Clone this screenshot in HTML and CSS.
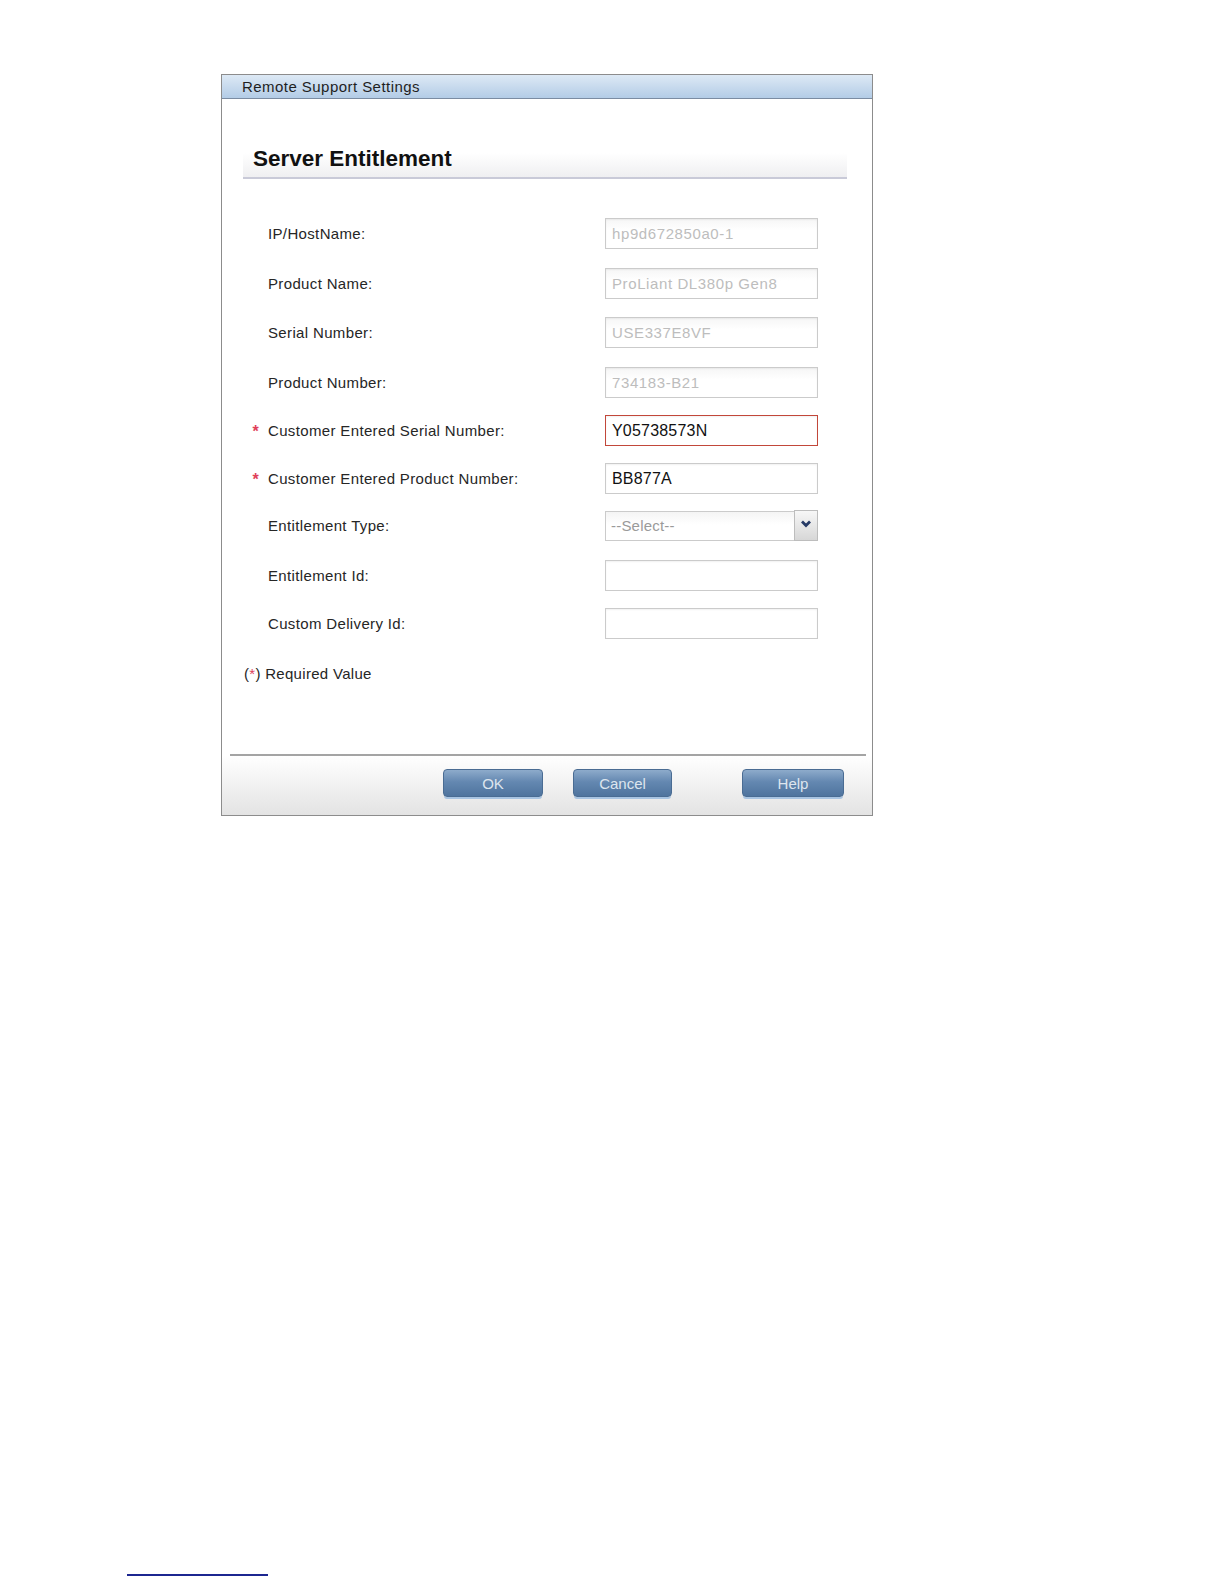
FILE: index.html
```html
<!DOCTYPE html>
<html lang="en">
<head>
<meta charset="utf-8">
<title>Remote Support Settings</title>
<link rel="stylesheet" href="styles.css">
</head>
<body>
<div class="dialog">
  <div class="titlebar">Remote Support Settings</div>
  <div class="main">
    <div class="heading">Server Entitlement</div>
    <div class="form">
      <div class="row"><span class="req"></span><span class="label">IP/HostName:</span><div class="field disabled">hp9d672850a0-1</div></div>
      <div class="row gap19"><span class="req"></span><span class="label">Product Name:</span><div class="field disabled">ProLiant DL380p Gen8</div></div>
      <div class="row gap18"><span class="req"></span><span class="label">Serial Number:</span><div class="field disabled">USE337E8VF</div></div>
      <div class="row gap19"><span class="req"></span><span class="label">Product Number:</span><div class="field disabled">734183-B21</div></div>
      <div class="row gap17"><span class="req">*</span><span class="label">Customer Entered Serial Number:</span><div class="field error">Y05738573N</div></div>
      <div class="row gap17"><span class="req">*</span><span class="label">Customer Entered Product Number:</span><div class="field">BB877A</div></div>
      <div class="row gap16"><span class="req"></span><span class="label">Entitlement Type:</span>
        <div class="select">
          <div class="select-value">--Select--</div>
          <div class="select-btn">
            <svg width="14" height="12" viewBox="0 0 14 12"><path d="M3 3.5 L7 7.5 L11 3.5" fill="none" stroke="#263a66" stroke-width="2.8"/></svg>
          </div>
        </div>
      </div>
      <div class="row gap19"><span class="req"></span><span class="label">Entitlement Id:</span><div class="field"></div></div>
      <div class="row gap17"><span class="req"></span><span class="label">Custom Delivery Id:</span><div class="field"></div></div>
    </div>
    <div class="note">(<span class="star">*</span>) Required Value</div>
  </div>
  <div class="footer">
    <div class="sep"></div>
    <div class="buttons">
      <div class="btn btn-ok">OK</div>
      <div class="btn btn-cancel">Cancel</div>
      <div class="btn btn-help">Help</div>
    </div>
  </div>
</div>
<div class="footnote-rule"></div>
</body>
</html>
```
FILE: styles.css
```css
html, body {
  margin: 0;
  padding: 0;
  background: #ffffff;
}
body {
  font-family: "Liberation Sans", Arial, sans-serif;
  color: #222;
}
.dialog {
  box-sizing: border-box;
  margin: 74px 0 0 221px;
  width: 652px;
  height: 742px;
  border: 1px solid #8c8c8c;
  display: flex;
  flex-direction: column;
  background: #fff;
}
.titlebar {
  height: 23px;
  line-height: 24px;
  border-bottom: 1px solid #7b8ca2;
  background: linear-gradient(to bottom, #dde9f5, #b3cce6);
  padding-left: 20px;
  font-size: 15px;
  letter-spacing: 0.45px;
  color: #1f1f1f;
}
.main {
  flex: 1;
  padding: 0 25px 0 21px;
}
.heading {
  margin-top: 41px;
  height: 37px;
  line-height: 37px;
  padding-left: 10px;
  font-size: 22.5px;
  letter-spacing: 0;
  font-weight: bold;
  color: #111;
  border-bottom: 2px solid #c9cad8;
  background: linear-gradient(to bottom, #ffffff 35%, #efeff1);
}
.form {
  margin-top: 39px;
}
.row {
  display: grid;
  grid-template-columns: 25px 337px 213px;
  align-items: center;
  height: 31px;
}
.row.gap19 { margin-top: 19px; }
.row.gap18 { margin-top: 18px; }
.row.gap17 { margin-top: 17px; }
.row.gap16 { margin-top: 16px; }
.req {
  text-align: center;
  color: #e0405a;
  font-size: 16px;
  font-weight: bold;
  position: relative;
  top: 1px;
}
.label {
  font-size: 15px;
  letter-spacing: 0.35px;
  color: #262626;
}
.field {
  box-sizing: border-box;
  height: 31px;
  border: 1px solid #cbcbcb;
  box-shadow: inset 0 1px 2px rgba(0,0,0,0.06);
  background: #fff;
  padding-left: 6px;
  line-height: 29px;
  font-size: 16px;
  letter-spacing: 0.2px;
  color: #111;
}
.field.disabled {
  color: #bdbdbd;
  font-size: 15px;
  letter-spacing: 0.6px;
  background: linear-gradient(to bottom, #f6f6f6, #ffffff 40%);
}
.field.error {
  border-color: #c2473a;
}
.select {
  display: flex;
  height: 31px;
}
.select-value {
  box-sizing: border-box;
  width: 189px;
  height: 30px;
  margin-top: 1px;
  border: 1px solid #cbcbcb;
  border-right: none;
  padding-left: 5px;
  line-height: 28px;
  font-size: 15px;
  letter-spacing: 0.2px;
  color: #9a9a9a;
  background: linear-gradient(to bottom, #f4f4f4, #ffffff 45%);
}
.select-btn {
  box-sizing: border-box;
  width: 24px;
  height: 31px;
  border: 1px solid #bdbdbd;
  background: linear-gradient(to bottom, #f7f7f7, #d7d7d7);
  display: flex;
  align-items: center;
  justify-content: center;
  padding-bottom: 4px;
}
.note {
  margin-top: 26px;
  padding-left: 1px;
  font-size: 15px;
  letter-spacing: 0.3px;
  color: #262626;
}
.note .star {
  color: #e0405a;
}
.footer {
  height: 61px;
  display: flex;
  flex-direction: column;
}
.sep {
  height: 2px;
  margin: 0 6px 0 8px;
  background: #a4a4a4;
}
.buttons {
  flex: 1;
  display: flex;
  align-items: flex-start;
  padding: 13px 0 0 221px;
  background: linear-gradient(to bottom, #ffffff, #e3e3e3);
}
.btn {
  box-sizing: border-box;
  height: 28px;
  line-height: 27px;
  text-align: center;
  font-size: 15px;
  color: #dde5ee;
  border: 1px solid #4a6c93;
  border-radius: 4px;
  background: linear-gradient(to bottom, #8dabcb, #6488b1 45%, #4f749e);
  box-shadow: 0 3px 0 -1px #a8c4e2;
}
.btn-ok { width: 100px; }
.btn-cancel { width: 99px; margin-left: 30px; }
.btn-help { width: 102px; margin-left: 70px; }
.footnote-rule {
  margin: 758px 0 0 127px;
  width: 141px;
  height: 0;
  border-top: 2px solid #1c2690;
}
```
